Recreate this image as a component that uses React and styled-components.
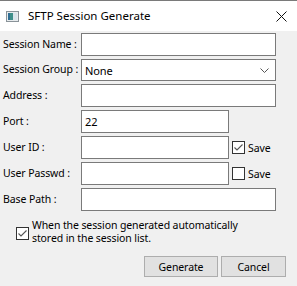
import React from "react";
import styled, { createGlobalStyle } from "styled-components";

const GlobalStyle = createGlobalStyle`
  html, body {
    margin: 0;
    padding: 0;
    background: #f0f0f0;
  }
  body {
    font-family: "Noto Sans", "Open Sans", sans-serif;
    font-size: 10.5px;
    letter-spacing: -0.1px;
    color: #000;
  }
`;

const Window = styled.div`
  width: 297px;
  height: 286px;
  box-sizing: border-box;
  background: #f0f0f0;
  border-top: 1px solid #7a7a7a;
  display: flex;
  flex-direction: column;
`;

const TitleBar = styled.div`
  height: 30px;
  background: #fff;
  display: flex;
  align-items: center;
  padding-left: 6px;
  padding-right: 10px;
`;

const Title = styled.span`
  flex: 1;
  margin-left: 9px;
  font-size: 11.5px;
  letter-spacing: 0;
  line-height: 14px;
`;

const Form = styled.div`
  display: grid;
  grid-template-columns: 78px 195px;
  row-gap: 3px;
  padding: 2px 0 0 3px;
  align-items: center;
`;

const Label = styled.label`
  line-height: 14px;
  margin-top: -2px;
  white-space: nowrap;
`;

const Field = styled.div`
  display: flex;
  align-items: center;
`;

const Input = styled.input`
  box-sizing: border-box;
  height: 23px;
  width: ${(p) => p.$width || "100%"};
  border: 1px solid #7a7a7a;
  background: #fff;
  font: inherit;
  letter-spacing: inherit;
  font-size: 11px;
  padding: 0 3px;
  margin: 0;
  outline: none;
`;

const Select = styled.div`
  box-sizing: border-box;
  height: 22px;
  width: 100%;
  border: 1px solid #7a7a7a;
  background: #fff;
  display: flex;
  align-items: center;
  justify-content: space-between;
  padding: 0 6px 0 3px;
  font-size: 11px;
`;

const Check = styled.span`
  box-sizing: border-box;
  width: 13px;
  height: 13px;
  border: 1px solid #333;
  background: #fff;
  display: inline-flex;
  align-items: center;
  justify-content: center;
  flex-shrink: 0;
`;

const CheckLabel = styled.span`
  margin-left: 3px;
  line-height: 14px;
`;

const SaveBox = styled.div`
  display: flex;
  align-items: center;
  margin-left: 3px;
`;

const AutoStore = styled.div`
  display: flex;
  align-items: center;
  padding-left: 16px;
  margin-top: 11px;
`;

const AutoText = styled.span`
  margin-left: 3px;
  margin-top: -3px;
  line-height: 13px;
`;

const Buttons = styled.div`
  display: flex;
  justify-content: flex-end;
  gap: 3px;
  padding-right: 11px;
  margin-top: 11px;
`;

const Button = styled.button`
  box-sizing: border-box;
  height: 21px;
  width: ${(p) => p.$width}px;
  background: #e1e1e1;
  border: 1px solid #adadad;
  font: inherit;
  letter-spacing: inherit;
  color: #000;
  padding: 0;
  margin: 0;
`;

const AppIcon = () => (
  <svg width="13" height="11" viewBox="0 0 13 11">
    <rect x="0.5" y="0.5" width="12" height="10" fill="#e8ecee" stroke="#8a9399" />
    <rect x="2" y="2" width="5" height="7" fill="#3f8f8a" />
    <rect x="7" y="2" width="4" height="7" fill="#d9e4ea" />
    <rect x="2" y="2" width="2" height="7" fill="#2f6f93" />
  </svg>
);

const CloseIcon = () => (
  <svg width="11" height="11" viewBox="0 0 11 11">
    <path d="M0.5 0.5 L10.5 10.5 M10.5 0.5 L0.5 10.5" stroke="#111" strokeWidth="1" />
  </svg>
);

const Chevron = () => (
  <svg width="9" height="5" viewBox="0 0 9 5">
    <path d="M0.5 0.5 L4.5 4.5 L8.5 0.5" stroke="#555" strokeWidth="1" fill="none" />
  </svg>
);

const CheckMark = () => (
  <svg width="11" height="11" viewBox="0 0 11 11">
    <path d="M1.5 5.5 L4 8 L9.5 2.5" stroke="#555" strokeWidth="1.1" fill="none" />
  </svg>
);

const CheckBox = ({ checked }) => <Check>{checked && <CheckMark />}</Check>;

export default function App() {
  return (
    <>
      <GlobalStyle />
      <Window>
        <TitleBar>
          <AppIcon />
          <Title>SFTP Session Generate</Title>
          <CloseIcon />
        </TitleBar>
        <Form>
          <Label>Session Name :</Label>
          <Field>
            <Input />
          </Field>
          <Label>Session Group :</Label>
          <Field>
            <Select>
              <span>None</span>
              <Chevron />
            </Select>
          </Field>
          <Label>Address :</Label>
          <Field>
            <Input />
          </Field>
          <Label>Port :</Label>
          <Field>
            <Input $width="148px" defaultValue="22" />
          </Field>
          <Label>User ID :</Label>
          <Field>
            <Input $width="148px" />
            <SaveBox>
              <CheckBox checked />
              <CheckLabel>Save</CheckLabel>
            </SaveBox>
          </Field>
          <Label>User Passwd :</Label>
          <Field>
            <Input $width="148px" type="password" />
            <SaveBox>
              <CheckBox />
              <CheckLabel>Save</CheckLabel>
            </SaveBox>
          </Field>
          <Label>Base Path :</Label>
          <Field>
            <Input />
          </Field>
        </Form>
        <AutoStore>
          <CheckBox checked />
          <AutoText>
            When the session generated automatically
            <br />
            stored in the session list.
          </AutoText>
        </AutoStore>
        <Buttons>
          <Button $width={74}>Generate</Button>
          <Button $width={65}>Cancel</Button>
        </Buttons>
      </Window>
    </>
  );
}
